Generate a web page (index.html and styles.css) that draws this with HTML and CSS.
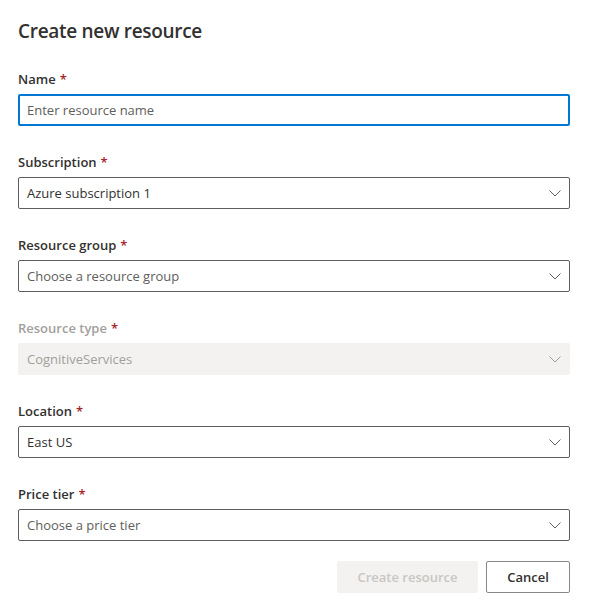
FILE: index.html
```html
<!DOCTYPE html>
<html lang="en">
<head>
<meta charset="utf-8">
<title>Create new resource</title>
<link rel="stylesheet" href="styles.css">
</head>
<body>
<div class="panel">
  <h1 class="title">Create new resource</h1>
  <form class="form">
    <div class="field">
      <label class="label">Name<span class="req">*</span></label>
      <div class="textbox focused"><span class="placeholder">Enter resource name</span></div>
    </div>
    <div class="field">
      <label class="label">Subscription<span class="req">*</span></label>
      <div class="dropdown"><span class="value">Azure subscription 1</span>
        <svg class="caret" width="12" height="12" viewBox="0 0 12 12"><path d="M0.5 3.5 L6 9 L11.5 3.5" fill="none" stroke="currentColor" stroke-width="1"/></svg></div>
    </div>
    <div class="field">
      <label class="label">Resource group<span class="req">*</span></label>
      <div class="dropdown"><span class="placeholder">Choose a resource group</span>
        <svg class="caret" width="12" height="12" viewBox="0 0 12 12"><path d="M0.5 3.5 L6 9 L11.5 3.5" fill="none" stroke="currentColor" stroke-width="1"/></svg></div>
    </div>
    <div class="field disabled">
      <label class="label">Resource type<span class="req">*</span></label>
      <div class="dropdown"><span class="value">CognitiveServices</span>
        <svg class="caret" width="12" height="12" viewBox="0 0 12 12"><path d="M0.5 3.5 L6 9 L11.5 3.5" fill="none" stroke="currentColor" stroke-width="1"/></svg></div>
    </div>
    <div class="field">
      <label class="label">Location<span class="req">*</span></label>
      <div class="dropdown"><span class="value">East US</span>
        <svg class="caret" width="12" height="12" viewBox="0 0 12 12"><path d="M0.5 3.5 L6 9 L11.5 3.5" fill="none" stroke="currentColor" stroke-width="1"/></svg></div>
    </div>
    <div class="field">
      <label class="label">Price tier<span class="req">*</span></label>
      <div class="dropdown"><span class="placeholder">Choose a price tier</span>
        <svg class="caret" width="12" height="12" viewBox="0 0 12 12"><path d="M0.5 3.5 L6 9 L11.5 3.5" fill="none" stroke="currentColor" stroke-width="1"/></svg></div>
    </div>
    <div class="actions">
      <button type="button" class="btn primary" disabled>Create resource</button>
      <button type="button" class="btn default">Cancel</button>
    </div>
  </form>
</div>
</body>
</html>
```

FILE: styles.css
```css
* { box-sizing: border-box; }
html, body { margin: 0; padding: 0; background: #ffffff; }
body {
  font-family: "Open Sans", "Noto Sans", sans-serif;
  color: #323130;
  -webkit-font-smoothing: antialiased;
}
.panel {
  width: 593px;
  padding: 17px 23px 0 18px;
}
.title {
  margin: 0;
  font-size: 19px;
  line-height: 28px;
  font-weight: 600;
  color: #323130;
  letter-spacing: -0.3px;
}
.form {
  display: flex;
  flex-direction: column;
  gap: 21px;
  margin-top: 19px;
}
.field { display: flex; flex-direction: column; }
.label {
  font-size: 13px;
  line-height: 20px;
  padding: 5px 0;
  font-weight: 600;
  color: #323130;
}
.req { color: #a4262c; padding-left: 4px; }
.textbox, .dropdown {
  height: 32px;
  border: 1px solid #605e5c;
  border-radius: 2px;
  display: flex;
  align-items: center;
  padding: 0 8px;
  font-size: 13px;
}
.textbox.focused {
  border: 2px solid #0078d4;
  padding: 0 7px;
}
.placeholder { color: #605e5c; }
.value { color: #323130; }
.dropdown { justify-content: space-between; }
.caret { color: #605e5c; flex: none; }
.disabled .label { color: #a19f9d; }
.disabled .dropdown {
  background: #f3f2f1;
  border-color: #f3f2f1;
}
.disabled .value { color: #a19f9d; }
.disabled .caret { color: #a19f9d; }
.actions {
  display: flex;
  justify-content: flex-end;
  gap: 8px;
  margin-top: -1px;
}
.btn {
  height: 32px;
  border-radius: 2px;
  font-family: inherit;
  font-size: 13px;
  font-weight: 600;
  padding: 0 8px;
  white-space: nowrap;
  cursor: pointer;
}
.btn.primary {
  width: 141px;
  background: #f3f2f1;
  border: 1px solid #f3f2f1;
  color: #c8c6c4;
}
.btn.default {
  width: 84px;
  background: #ffffff;
  border: 1px solid #8a8886;
  color: #323130;
}
```
